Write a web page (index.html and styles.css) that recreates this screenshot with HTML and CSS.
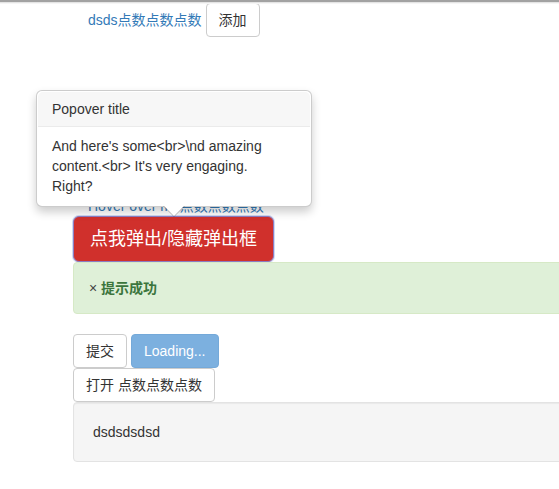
FILE: index.html
```html
<!DOCTYPE html>
<html lang="zh">
<head>
<meta charset="utf-8">
<title>Popover demo</title>
<link rel="stylesheet" href="styles.css">
</head>
<body>
<div class="topbar"></div>
<div class="page">
  <div class="row-first">
    <a class="link" href="#">dsds点数点数点数</a>
    <button class="btn btn-default">添加</button>
  </div>

  <div class="hover-line">
    <a class="link" href="#">Hover over me点数点数点数</a>
  </div>

  <button class="btn btn-lg btn-danger">点我弹出/隐藏弹出框</button>

  <div class="alert">
    <span class="close">×</span> <strong>提示成功</strong>
  </div>

  <div class="btn-line">
    <button class="btn btn-default">提交</button>
    <button class="btn btn-primary" disabled>Loading...</button>
  </div>
  <div class="btn-line">
    <button class="btn btn-default">打开 点数点数点数</button>
  </div>

  <div class="well">dsdsdsdsd</div>

  <div class="popover">
    <h3 class="popover-title">Popover title</h3>
    <div class="popover-content">And here's some&lt;br&gt;\nd amazing<br>content.&lt;br&gt; It's very engaging.<br>Right?</div>
    <div class="arrow"></div>
  </div>
</div>
</body>
</html>
```

FILE: styles.css
```css
html, body {
  margin: 0;
  padding: 0;
  overflow: hidden;
  background: #fff;
}
body {
  font-family: "Liberation Sans", Arial, "Noto Sans CJK SC", sans-serif;
  font-size: 14px;
  line-height: 20px;
  color: #333;
}
.topbar {
  height: 2px;
  background: #a2a2a2;
  border-bottom: 1px solid #e4e4e4;
  box-shadow: 0 1px 0 #f6f6f6;
  position: relative;
  z-index: 2;
}
.page {
  position: relative;
  width: 760px;
  padding-left: 73px;
}
.link {
  color: #337ab7;
  text-decoration: none;
}
.row-first {
  display: flex;
  align-items: center;
  gap: 4px;
  padding-left: 15px;
  height: 34px;
}
.hover-line {
  padding-left: 15px;
  margin-top: 159px;
  height: 20px;
}
.btn {
  display: inline-block;
  font-family: inherit;
  font-size: 14px;
  line-height: 20px;
  padding: 6px 12px;
  border: 1px solid #ccc;
  border-radius: 4px;
  background: #fff;
  color: #333;
  margin: 0;
  white-space: nowrap;
}
.btn-lg {
  display: block;
  font-size: 18px;
  line-height: 24px;
  padding: 10px 16px;
  border-radius: 6px;
  color: #fff;
}
.btn-danger {
  background: #d0302c;
  border-color: #8c7cc2;
  box-shadow: 0 0 0 1px rgba(120, 150, 220, 0.35);
}
.btn-primary {
  background: #7cb0df;
  border-color: #74a9d9;
  color: #fff;
}
.alert {
  padding: 15px;
  border: 1px solid #d6e9c6;
  border-radius: 4px;
  background: #dff0d8;
  color: #3c763d;
  margin-bottom: 20px;
}
.close {
  color: #444;
}
.alert strong {
  font-weight: bold;
}
.btn-line {
  display: flex;
  gap: 4px;
  height: 34px;
}
.well {
  min-height: 20px;
  padding: 19px;
  background: #f5f5f5;
  border: 1px solid #e3e3e3;
  border-radius: 4px;
  box-shadow: inset 0 1px 1px rgba(0, 0, 0, 0.05);
}
.popover {
  position: absolute;
  top: 87px;
  left: 36px;
  box-sizing: border-box;
  width: 276px;
  padding: 1px;
  background: #fff;
  border: 1px solid rgba(0, 0, 0, 0.2);
  border-radius: 6px;
  box-shadow: 0 5px 10px rgba(0, 0, 0, 0.2);
}
.popover-title {
  margin: 0;
  padding: 8px 14px;
  font-size: 14px;
  font-weight: normal;
  line-height: 18px;
  background: #f7f7f7;
  border-bottom: 1px solid #ebebeb;
  border-radius: 5px 5px 0 0;
}
.popover-content {
  padding: 9px 14px;
}
.arrow {
  position: absolute;
  left: 50%;
  bottom: -11px;
  margin-left: -11px;
  width: 0;
  height: 0;
  border-left: 11px solid transparent;
  border-right: 11px solid transparent;
  border-top: 11px solid rgba(0, 0, 0, 0.25);
}
.arrow::after {
  content: "";
  position: absolute;
  left: -10px;
  top: -11px;
  border-left: 10px solid transparent;
  border-right: 10px solid transparent;
  border-top: 10px solid #fff;
}
```
